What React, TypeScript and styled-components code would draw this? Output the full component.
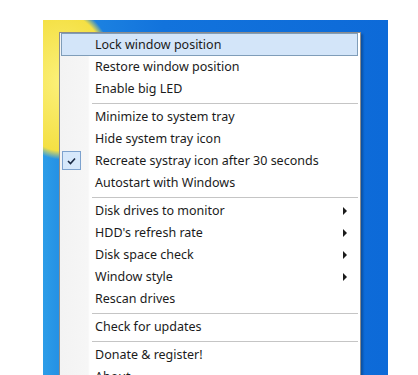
import React from "react";
import styled, { createGlobalStyle } from "styled-components";

const Global = createGlobalStyle`
  html, body { margin: 0; padding: 0; background: #ffffff; }
  body { font-family: "Noto Sans", "Open Sans", sans-serif; }
`;

const Page = styled.div`
  width: 418px;
  height: 375px;
  padding: 20px 0 0 43px;
  box-sizing: border-box;
  overflow: hidden;
`;

const Desktop = styled.div`
  width: 345px;
  height: 355px;
  overflow: hidden;
  padding: 12px 0 0 16px;
  box-sizing: border-box;
  background:
    radial-gradient(ellipse 90px 125px at 18px 62px, #fbf07a 0%, #f4e044 55%, rgba(244, 224, 68, 0) 62%),
    linear-gradient(165deg, #3c8fd8 0px, #3c8fd8 5px, rgba(0,0,0,0) 6px),
    linear-gradient(to right, #2c9de8 0px, #1f86e2 30px, #1273dc 120px, #0d6ad8 100%);
`;

const Menu = styled.div`
  width: 302px;
  background: linear-gradient(to right, #f3f3f3 0px, #f6f6f6 28px, #ffffff 30px);
  border: 1px solid #8c8c8c;
  box-shadow: 2px 2px 2px rgba(0, 0, 0, 0.25);
  padding: 0 2px 0 1px;
  box-sizing: border-box;
  display: flex;
  flex-direction: column;
  font-size: 12.5px;
  color: #1b1b1b;
`;

const Row = styled.div<{ $active?: boolean }>`
  height: 23px;
  display: flex;
  align-items: center;
  position: relative;
  box-sizing: border-box;
  border: 1px solid ${(p) => (p.$active ? "#7f9db9" : "transparent")};
  background: ${(p) => (p.$active ? "#d3e5f9" : "transparent")};
  margin-bottom: -1px;
`;

const Gutter = styled.div`
  width: 33px;
  flex: none;
  display: flex;
  align-items: center;
  justify-content: flex-start;
`;

const CheckBox = styled.div`
  width: 19px;
  height: 19px;
  box-sizing: border-box;
  border: 1px solid #7da2ce;
  background: #d6e8fb;
  display: flex;
  align-items: center;
  justify-content: center;
`;

const Label = styled.span`
  flex: 1;
  white-space: nowrap;
  line-height: 16px;
`;

const Arrow = styled.div`
  width: 0;
  height: 0;
  border-top: 4px solid transparent;
  border-bottom: 4px solid transparent;
  border-left: 4px solid #1b1b1b;
  margin-right: 10px;
`;

const Separator = styled.div`
  height: 6px;
  display: flex;
  flex-direction: column;
  padding: 4px 0 0 31px;
  box-sizing: border-box;
  &::after {
    content: "";
    height: 1px;
    background: #c5c5c5;
    box-shadow: 0 1px 0 #ffffff;
  }
`;

type Item =
  | { sep: true }
  | { label: string; active?: boolean; checked?: boolean; sub?: boolean; sep?: false };

const items: Item[] = [
  { label: "Lock window position", active: true },
  { label: "Restore window position" },
  { label: "Enable big LED" },
  { sep: true },
  { label: "Minimize to system tray" },
  { label: "Hide system tray icon" },
  { label: "Recreate systray icon after 30 seconds", checked: true },
  { label: "Autostart with Windows" },
  { sep: true },
  { label: "Disk drives to monitor", sub: true },
  { label: "HDD's refresh rate", sub: true },
  { label: "Disk space check", sub: true },
  { label: "Window style", sub: true },
  { label: "Rescan drives" },
  { sep: true },
  { label: "Check for updates" },
  { sep: true },
  { label: "Donate & register!" },
  { label: "About" },
];

export default function App() {
  return (
    <Page>
      <Global />
      <Desktop>
        <Menu>
          {items.map((it, i) =>
            it.sep ? (
              <Separator key={i} />
            ) : (
              <Row key={i} $active={it.active}>
                <Gutter>
                  {it.checked && (
                    <CheckBox>
                      <svg width="9" height="8" viewBox="0 0 9 8">
                        <path d="M1 4 L3.5 6.5 L8 1.5" fill="none" stroke="#1b2a44" strokeWidth="1.6" />
                      </svg>
                    </CheckBox>
                  )}
                </Gutter>
                <Label>{it.label}</Label>
                {it.sub && <Arrow />}
              </Row>
            )
          )}
        </Menu>
      </Desktop>
    </Page>
  );
}
